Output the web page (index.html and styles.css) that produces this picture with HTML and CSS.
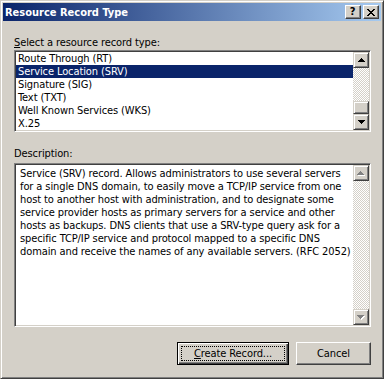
FILE: index.html
```html
<!DOCTYPE html>
<html lang="en">
<head>
    <meta charset="UTF-8">
    <meta name="viewport" content="width=device-width, initial-scale=1.0">
    <title>Resource Record Type</title>
    <link rel="stylesheet" href="styles.css">
</head>
<body>
    <div class="window">
        <div class="titlebar">
            <span class="title">Resource Record Type</span>
            <div class="caption-buttons">
                <div class="cap-btn help">?</div>
                <div class="cap-btn close">
                    <svg width="8" height="7" viewBox="0 0 8 7" shape-rendering="crispEdges">
                        <path d="M0 0h2v1H0z M6 0h2v1H6z M1 1h2v1H1z M5 1h2v1H5z M2 2h4v1H2z M3 3h2v1H3z M2 4h4v1H2z M1 5h2v1H1z M5 5h2v1H5z M0 6h2v1H0z M6 6h2v1H6z" fill="#000"/>
                    </svg>
                </div>
            </div>
        </div>

        <div class="content">
            <div class="label"><u>S</u>elect a resource record type:</div>
            <div class="sunken listbox">
                <ul class="items">
                    <li>Route Through (RT)</li>
                    <li class="selected">Service Location (SRV)</li>
                    <li>Signature (SIG)</li>
                    <li>Text (TXT)</li>
                    <li>Well Known Services (WKS)</li>
                    <li>X.25</li>
                </ul>
                <div class="scrollbar">
                    <div class="sb-btn">
                        <svg width="7" height="4" viewBox="0 0 7 4" shape-rendering="crispEdges"><path d="M3 0h1v1H3z M2 1h3v1H2z M1 2h5v1H1z M0 3h7v1H0z" fill="#000"/></svg>
                    </div>
                    <div class="sb-track">
                        <div class="sb-thumb"></div>
                    </div>
                    <div class="sb-btn">
                        <svg width="7" height="4" viewBox="0 0 7 4" shape-rendering="crispEdges"><path d="M0 0h7v1H0z M1 1h5v1H1z M2 2h3v1H2z M3 3h1v1H3z" fill="#000"/></svg>
                    </div>
                </div>
            </div>

            <div class="label label-desc">Description:</div>
            <div class="sunken descbox">
                <div class="desc-text">
                    Service (SRV) record. Allows administrators to use several servers<br>
                    for a single DNS domain, to easily move a TCP/IP service from one<br>
                    host to another host with administration, and to designate some<br>
                    service provider hosts as primary servers for a service and other<br>
                    hosts as backups. DNS clients that use a SRV-type query ask for a<br>
                    specific TCP/IP service and protocol mapped to a specific DNS<br>
                    domain and receive the names of any available servers. (RFC 2052)
                </div>
                <div class="scrollbar disabled">
                    <div class="sb-btn">
                        <svg width="8" height="5" viewBox="0 0 8 5" shape-rendering="crispEdges"><path d="M4 1h1v1H4z M3 2h3v1H3z M2 3h5v1H2z M1 4h7v1H1z" fill="#fff"/><path d="M3 0h1v1H3z M2 1h3v1H2z M1 2h5v1H1z M0 3h7v1H0z" fill="#808080"/></svg>
                    </div>
                    <div class="sb-track"></div>
                    <div class="sb-btn">
                        <svg width="8" height="5" viewBox="0 0 8 5" shape-rendering="crispEdges"><path d="M1 1h7v1H1z M2 2h5v1H2z M3 3h3v1H3z M4 4h1v1H4z" fill="#fff"/><path d="M0 0h7v1H0z M1 1h5v1H1z M2 2h3v1H2z M3 3h1v1H3z" fill="#808080"/></svg>
                    </div>
                </div>
            </div>

            <div class="button-row">
                <button class="btn default"><span class="focus"><u>C</u>reate Record...</span></button>
                <button class="btn">Cancel</button>
            </div>
        </div>
    </div>
</body>
</html>
```

FILE: styles.css
```css
* {
    box-sizing: border-box;
}

body {
    margin: 0;
    background: #d4d0c8;
    font-family: "DejaVu Sans Condensed", "Liberation Sans", sans-serif;
    font-size: 11px;
    letter-spacing: -0.1px;
    color: #000;
}

.window {
    width: 384px;
    height: 379px;
    background: #d4d0c8;
    border: 1px solid;
    border-color: #d4d0c8 #404040 #404040 #d4d0c8;
    box-shadow: inset 1px 1px #fff, inset -1px -1px #808080;
    padding: 2px;
    display: flex;
    flex-direction: column;
}

.titlebar {
    height: 18px;
    flex: none;
    display: flex;
    align-items: center;
    padding: 0 2px;
    background: linear-gradient(to right, #0a246a, #a6caf0);
}

.title {
    color: #fff;
    font-weight: bold;
    font-size: 11px;
    letter-spacing: 0;
}

.caption-buttons {
    margin-left: auto;
    display: flex;
    gap: 2px;
}

.cap-btn {
    width: 16px;
    height: 14px;
    background: #d4d0c8;
    border: 1px solid;
    border-color: #fff #404040 #404040 #fff;
    box-shadow: inset -1px -1px #808080;
    display: flex;
    align-items: center;
    justify-content: center;
}

.help {
    font-weight: bold;
    font-size: 11px;
    line-height: 12px;
    padding-right: 1px;
}

.content {
    flex: 1;
    display: flex;
    flex-direction: column;
    padding: 0 10px 0 11px;
}

.label {
    margin-top: 15px;
    line-height: 13px;
    height: 13px;
}

.label-desc {
    margin-top: 15px;
}

/* sunken 3d border used by list and edit box */
.sunken {
    background: #fff;
    border: 1px solid;
    border-color: #808080 #fff #fff #808080;
    box-shadow: inset 1px 1px #404040, inset -1px -1px #d4d0c8;
    padding: 1px;
    display: flex;
}

.listbox {
    margin-top: 1px;
    height: 82px;
}

.items {
    flex: 1;
    list-style: none;
    margin: 0;
    padding: 0;
}

.items li {
    height: 13px;
    line-height: 13px;
    padding-left: 2px;
    white-space: nowrap;
}

.items li.selected {
    background: #0a246a;
    color: #fff;
}

.scrollbar {
    width: 16px;
    flex: none;
    display: flex;
    flex-direction: column;
}

.sb-btn {
    width: 16px;
    height: 16px;
    flex: none;
    background: #d4d0c8;
    border: 1px solid;
    border-color: #d4d0c8 #404040 #404040 #d4d0c8;
    box-shadow: inset 1px 1px #fff, inset -1px -1px #808080;
    display: flex;
    align-items: center;
    justify-content: center;
}

.sb-btn svg {
    display: block;
}

.sb-track {
    flex: 1;
    display: flex;
    flex-direction: column;
    justify-content: flex-end;
    background-color: #fff;
    background-image: conic-gradient(#fff 25%, #d4d0c8 0 50%, #fff 0 75%, #d4d0c8 0);
    background-size: 2px 2px;
}

.sb-thumb {
    height: 13px;
    background: #d4d0c8;
    border: 1px solid;
    border-color: #d4d0c8 #404040 #404040 #d4d0c8;
    box-shadow: inset 1px 1px #fff, inset -1px -1px #808080;
}

.descbox {
    margin-top: 3px;
    height: 164px;
}

.desc-text {
    flex: 1;
    padding: 2px 0 0 4px;
    line-height: 13px;
    white-space: nowrap;
}

.button-row {
    margin-top: 15px;
    display: flex;
    justify-content: flex-end;
    gap: 7px;
}

.btn {
    height: 23px;
    width: 75px;
    padding: 0;
    font-family: inherit;
    font-size: 11px;
    letter-spacing: inherit;
    color: #000;
    background: #d4d0c8;
    border: 1px solid;
    border-color: #fff #404040 #404040 #fff;
    box-shadow: inset -1px -1px #808080;
    display: flex;
    align-items: center;
    justify-content: center;
}

.btn.default {
    width: 112px;
    border-color: #000;
    box-shadow: inset 1px 1px #fff, inset -1px -1px #404040, inset -2px -2px #808080;
    padding: 3px;
}

.focus {
    flex: 1;
    align-self: stretch;
    display: flex;
    align-items: center;
    justify-content: center;
    border: 1px dotted #000;
}
```
